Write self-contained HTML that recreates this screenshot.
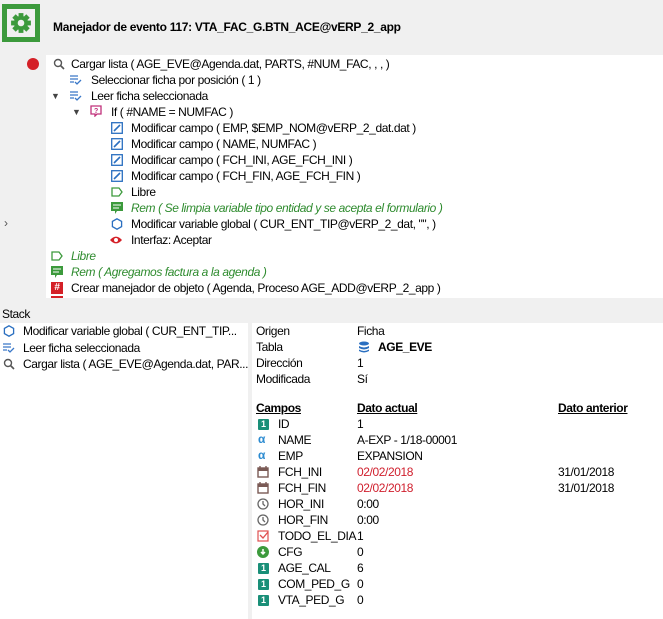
<!DOCTYPE html><html><head><style>
body{margin:0;width:663px;height:619px;background:#f0f0f0;font-family:"Liberation Sans",sans-serif;font-size:12px;letter-spacing:-0.4px;color:#000;position:relative;overflow:hidden}
.a{position:absolute;white-space:nowrap;line-height:16px}
.w{position:absolute;background:#fff}
.g{color:#2e8b2e;font-style:italic}
.ic{position:absolute;width:12px;height:12px}
.u{text-decoration:underline;font-weight:bold}
.r{color:#d0202e}
.n1{position:absolute;width:11px;height:11px;background:#1a8f78;color:#fff;font-size:9px;line-height:11px;text-align:center;font-weight:bold;border-radius:1px;letter-spacing:0}
</style></head><body>
<div style="position:absolute;left:2px;top:4px;width:38px;height:38px;background:#3c9a3c"></div>
<div style="position:absolute;left:7px;top:9px;width:28px;height:28px;background:#f0f0f0"></div>
<svg style="position:absolute;left:10px;top:12px" width="22" height="22" viewBox="0 0 20 20"><g fill="#3c9a3c"><circle cx="10" cy="10" r="6.5"/><rect x="7.8" y="1" width="4.4" height="18"/><rect x="1" y="7.8" width="18" height="4.4"/><rect x="7.8" y="1" width="4.4" height="18" transform="rotate(45 10 10)"/><rect x="7.8" y="1" width="4.4" height="18" transform="rotate(-45 10 10)"/></g><circle cx="10" cy="10" r="3" fill="#f0f0f0"/></svg>
<div class="a" style="left:53px;top:19px;font-weight:bold;letter-spacing:-0.3px">Manejador de evento 117: VTA_FAC_G.BTN_ACE@vERP_2_app</div>
<div class="w" style="left:46px;top:55px;width:617px;height:243px"></div>
<div class="a" style="left:4px;top:215px;color:#555">›</div>
<div style="position:absolute;left:27px;top:58px;width:12px;height:12px;border-radius:50%;background:#d42027"></div>
<svg class="ic" style="left:53px;top:58px" viewBox="0 0 12 12"><circle cx="5" cy="5" r="3.5" fill="none" stroke="#555" stroke-width="1.4"/><path d="M7.5 7.5L11 11" stroke="#555" stroke-width="1.6"/></svg>
<div class="a" style="left:71px;top:56px">Cargar lista ( AGE_EVE@Agenda.dat, PARTS, #NUM_FAC, , , )</div>
<svg class="ic" style="left:70px;top:74px" viewBox="0 0 12 12"><path d="M0 2h8M0 5h8M0 8h4M5 8l2 2 4-4" stroke="#3a78c8" stroke-width="1.3" fill="none"/></svg>
<div class="a" style="left:91px;top:72px">Seleccionar ficha por posición ( 1 )</div>
<div class="a" style="left:51px;top:88px;font-size:9px;color:#444">▼</div>
<svg class="ic" style="left:70px;top:90px" viewBox="0 0 12 12"><path d="M0 2h8M0 5h8M0 8h4M5 8l2 2 4-4" stroke="#3a78c8" stroke-width="1.3" fill="none"/></svg>
<div class="a" style="left:91px;top:88px">Leer ficha seleccionada</div>
<div class="a" style="left:72px;top:104px;font-size:9px;color:#444">▼</div>
<svg class="ic" style="left:90px;top:105px" viewBox="0 0 12 12"><path d="M1 1h10v8H7l-2 2V9H1z" fill="none" stroke="#c0307a" stroke-width="1.3"/><text x="6" y="8" font-size="7" text-anchor="middle" fill="#c0307a" font-weight="bold">?</text></svg>
<div class="a" style="left:111px;top:104px">If ( #NAME = NUMFAC )</div>
<div class="a" style="left:131px;top:120px">Modificar campo ( EMP, $EMP_NOM@vERP_2_dat.dat )</div>
<div class="a" style="left:131px;top:136px">Modificar campo ( NAME, NUMFAC )</div>
<div class="a" style="left:131px;top:152px">Modificar campo ( FCH_INI, AGE_FCH_INI )</div>
<div class="a" style="left:131px;top:168px">Modificar campo ( FCH_FIN, AGE_FCH_FIN )</div>
<svg class="ic" style="left:111px;top:122px" viewBox="0 0 12 12"><rect x=".7" y=".7" width="10.6" height="10.6" fill="none" stroke="#2a6fc0" stroke-width="1.3"/><path d="M3 9l6-6" stroke="#2a6fc0" stroke-width="1.6"/></svg>
<svg class="ic" style="left:111px;top:138px" viewBox="0 0 12 12"><rect x=".7" y=".7" width="10.6" height="10.6" fill="none" stroke="#2a6fc0" stroke-width="1.3"/><path d="M3 9l6-6" stroke="#2a6fc0" stroke-width="1.6"/></svg>
<svg class="ic" style="left:111px;top:154px" viewBox="0 0 12 12"><rect x=".7" y=".7" width="10.6" height="10.6" fill="none" stroke="#2a6fc0" stroke-width="1.3"/><path d="M3 9l6-6" stroke="#2a6fc0" stroke-width="1.6"/></svg>
<svg class="ic" style="left:111px;top:170px" viewBox="0 0 12 12"><rect x=".7" y=".7" width="10.6" height="10.6" fill="none" stroke="#2a6fc0" stroke-width="1.3"/><path d="M3 9l6-6" stroke="#2a6fc0" stroke-width="1.6"/></svg>
<svg class="ic" style="left:111px;top:186px" viewBox="0 0 12 12"><path d="M1 2h7l3 4-3 4H1z" fill="none" stroke="#3c9a3c" stroke-width="1.3"/></svg>
<div class="a" style="left:131px;top:184px">Libre</div>
<svg class="ic" style="left:111px;top:202px" viewBox="0 0 12 12"><path d="M0 0h12v9H6l-2 3V9H0z" fill="#3c9a3c"/><path d="M2 3h8M2 6h6" stroke="#fff"/></svg>
<div class="a g" style="left:131px;top:200px">Rem ( Se limpia variable tipo entidad y se acepta el formulario )</div>
<svg class="ic" style="left:111px;top:218px" viewBox="0 0 12 12"><path d="M6 .8l4.6 2.6v5.2L6 11.2 1.4 8.6V3.4z" fill="none" stroke="#2a6fc0" stroke-width="1.3"/></svg>
<div class="a" style="left:131px;top:216px">Modificar variable global ( CUR_ENT_TIP@vERP_2_dat, "", )</div>
<svg class="ic" style="left:110px;top:234px" width="14" viewBox="0 0 14 12"><path d="M0 6Q7-2 14 6Q7 14 0 6z" fill="#d42027"/><circle cx="7" cy="6" r="2.3" fill="#fff"/></svg>
<div class="a" style="left:131px;top:232px">Interfaz: Aceptar</div>
<svg class="ic" style="left:51px;top:250px" viewBox="0 0 12 12"><path d="M1 2h7l3 4-3 4H1z" fill="none" stroke="#3c9a3c" stroke-width="1.3"/></svg>
<div class="a g" style="left:71px;top:248px">Libre</div>
<svg class="ic" style="left:51px;top:266px" viewBox="0 0 12 12"><path d="M0 0h12v9H6l-2 3V9H0z" fill="#3c9a3c"/><path d="M2 3h8M2 6h6" stroke="#fff"/></svg>
<div class="a g" style="left:71px;top:264px">Rem ( Agregamos factura a la agenda )</div>
<div style="position:absolute;left:51px;top:282px;width:12px;height:12px;background:#d42027;color:#fff;font-size:10px;line-height:12px;text-align:center;font-weight:bold">#</div>
<div class="a" style="left:71px;top:280px">Crear manejador de objeto ( Agenda, Proceso AGE_ADD@vERP_2_app )</div>
<div style="position:absolute;left:51px;top:296px;width:12px;height:2px;background:#d42027"></div>
<div class="a" style="left:2px;top:306px">Stack</div>
<div class="w" style="left:0;top:323px;width:248px;height:296px"></div>
<div class="w" style="left:252px;top:323px;width:411px;height:296px"></div>
<svg class="ic" style="left:3px;top:325px" viewBox="0 0 12 12"><path d="M6 .8l4.6 2.6v5.2L6 11.2 1.4 8.6V3.4z" fill="none" stroke="#2a6fc0" stroke-width="1.3"/></svg>
<div class="a" style="left:23px;top:323px">Modificar variable global ( CUR_ENT_TIP...</div>
<svg class="ic" style="left:3px;top:342px" viewBox="0 0 12 12"><path d="M0 2h8M0 5h8M0 8h4M5 8l2 2 4-4" stroke="#3a78c8" stroke-width="1.3" fill="none"/></svg>
<div class="a" style="left:23px;top:340px">Leer ficha seleccionada</div>
<svg class="ic" style="left:3px;top:358px" viewBox="0 0 12 12"><circle cx="5" cy="5" r="3.5" fill="none" stroke="#555" stroke-width="1.4"/><path d="M7.5 7.5L11 11" stroke="#555" stroke-width="1.6"/></svg>
<div class="a" style="left:23px;top:356px">Cargar lista ( AGE_EVE@Agenda.dat, PAR...</div>
<div class="a" style="left:256px;top:323px">Origen</div><div class="a" style="left:357px;top:323px">Ficha</div>
<div class="a" style="left:256px;top:339px">Tabla</div>
<svg class="ic" style="left:358px;top:341px" viewBox="0 0 12 12"><ellipse cx="6" cy="2.5" rx="5" ry="2" fill="#2a6fc0"/><path d="M1 5q5 3 10 0v2q-5 3-10 0zM1 8.5q5 3 10 0v1.5q-5 3-10 0z" fill="#2a6fc0"/></svg>
<div class="a" style="left:378px;top:339px;font-weight:bold">AGE_EVE</div>
<div class="a" style="left:256px;top:355px">Dirección</div><div class="a" style="left:357px;top:355px">1</div>
<div class="a" style="left:256px;top:371px">Modificada</div><div class="a" style="left:357px;top:371px">Sí</div>
<div class="a u" style="left:256px;top:400px">Campos</div>
<div class="a u" style="left:357px;top:400px">Dato actual</div>
<div class="a u" style="left:558px;top:400px">Dato anterior</div>
<div class="n1" style="left:258px;top:419px">1</div><div class="a" style="left:278px;top:416px">ID</div><div class="a" style="left:357px;top:416px">1</div>
<div class="a" style="left:258px;top:431px;color:#2a8ad0;font-weight:bold">α</div><div class="a" style="left:278px;top:432px">NAME</div><div class="a" style="left:357px;top:432px">A-EXP - 1/18-00001</div>
<div class="a" style="left:258px;top:447px;color:#2a8ad0;font-weight:bold">α</div><div class="a" style="left:278px;top:448px">EMP</div><div class="a" style="left:357px;top:448px">EXPANSION</div>
<svg class="ic" style="left:257px;top:466px" viewBox="0 0 12 12"><rect x="1" y="2" width="10" height="9" fill="none" stroke="#7a5a55" stroke-width="1.4"/><rect x="1" y="2" width="10" height="3" fill="#7a5a55"/><path d="M3 0v3M9 0v3" stroke="#7a5a55" stroke-width="1.4"/></svg>
<div class="a" style="left:278px;top:464px">FCH_INI</div><div class="a r" style="left:357px;top:464px">02/02/2018</div><div class="a" style="left:558px;top:464px">31/01/2018</div>
<svg class="ic" style="left:257px;top:482px" viewBox="0 0 12 12"><rect x="1" y="2" width="10" height="9" fill="none" stroke="#7a5a55" stroke-width="1.4"/><rect x="1" y="2" width="10" height="3" fill="#7a5a55"/><path d="M3 0v3M9 0v3" stroke="#7a5a55" stroke-width="1.4"/></svg>
<div class="a" style="left:278px;top:480px">FCH_FIN</div><div class="a r" style="left:357px;top:480px">02/02/2018</div><div class="a" style="left:558px;top:480px">31/01/2018</div>
<svg class="ic" style="left:257px;top:498px" viewBox="0 0 12 12"><circle cx="6" cy="6" r="5" fill="none" stroke="#666" stroke-width="1.3"/><path d="M6 3v3l2 2" stroke="#666" stroke-width="1.3" fill="none"/></svg>
<div class="a" style="left:278px;top:496px">HOR_INI</div><div class="a" style="left:357px;top:496px">0:00</div>
<svg class="ic" style="left:257px;top:514px" viewBox="0 0 12 12"><circle cx="6" cy="6" r="5" fill="none" stroke="#666" stroke-width="1.3"/><path d="M6 3v3l2 2" stroke="#666" stroke-width="1.3" fill="none"/></svg>
<div class="a" style="left:278px;top:512px">HOR_FIN</div><div class="a" style="left:357px;top:512px">0:00</div>
<svg class="ic" style="left:257px;top:530px" viewBox="0 0 12 12"><rect x="1" y="1" width="10" height="10" fill="none" stroke="#e05050" stroke-width="1.2"/><path d="M3 5l3 3 5-6" stroke="#e05050" stroke-width="1.3" fill="none"/></svg>
<div class="a" style="left:278px;top:528px">TODO_EL_DIA</div><div class="a" style="left:357px;top:528px">1</div>
<svg class="ic" style="left:257px;top:546px" viewBox="0 0 12 12"><circle cx="6" cy="6" r="6" fill="#3c9a3c"/><path d="M6 3v5M4 6l2 2 2-2" stroke="#fff" stroke-width="1.5" fill="none"/></svg>
<div class="a" style="left:278px;top:544px">CFG</div><div class="a" style="left:357px;top:544px">0</div>
<div class="n1" style="left:258px;top:563px">1</div><div class="a" style="left:278px;top:560px">AGE_CAL</div><div class="a" style="left:357px;top:560px">6</div>
<div class="n1" style="left:258px;top:579px">1</div><div class="a" style="left:278px;top:576px">COM_PED_G</div><div class="a" style="left:357px;top:576px">0</div>
<div class="n1" style="left:258px;top:595px">1</div><div class="a" style="left:278px;top:592px">VTA_PED_G</div><div class="a" style="left:357px;top:592px">0</div>
</body></html>
